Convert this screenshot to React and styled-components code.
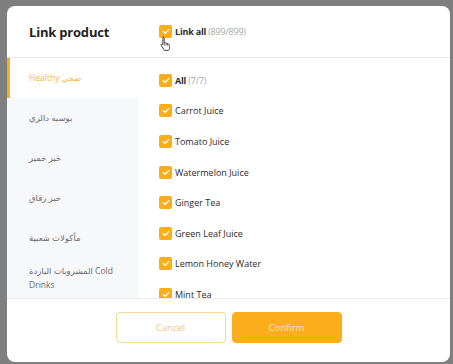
import React from 'react';
import styled, { createGlobalStyle } from 'styled-components';

const GlobalStyle = createGlobalStyle`
    html, body {
        margin: 0;
        padding: 0;
        background: #7f7f7f;
        font-family: "Open Sans", "DejaVu Sans", sans-serif;
    }
`;

const Overlay = styled.div`
    width: 453px;
    height: 364px;
    box-sizing: border-box;
    padding: 6px 3px 2px 7px;
    background: #7f7f7f;
    overflow: hidden;
`;

const Modal = styled.div`
    background: #fff;
    border-radius: 8px;
    height: 100%;
    display: flex;
    flex-direction: column;
    overflow: hidden;
`;

const Header = styled.header`
    display: flex;
    align-items: center;
    height: 51px;
    border-bottom: 1px solid #e8e8e8;
    flex-shrink: 0;
`;

const Title = styled.h1`
    width: 131px;
    box-sizing: border-box;
    padding-left: 22px;
    margin: 0;
    font-size: 13px;
    letter-spacing: -0.2px;
    font-weight: 700;
    color: #1f1f1f;
`;

const HeaderCheck = styled.div`
    position: relative;
    padding-left: 21px;
    display: flex;
    align-items: center;
    gap: 3px;
`;

const Body = styled.div`
    display: flex;
    flex: 1;
    min-height: 0;
`;

const Sidebar = styled.ul`
    list-style: none;
    margin: 0;
    padding: 0;
    width: 131px;
    background: #f7f8fa;
    overflow: hidden;
    flex-shrink: 0;
`;

const SideItem = styled.li`
    height: 40px;
    box-sizing: border-box;
    display: flex;
    align-items: center;
    padding: 0 12px 0 ${({ $active }) => ($active ? '19px' : '22px')};
    font-size: 8.5px;
    line-height: 14px;
    color: ${({ $active }) => ($active ? '#f7b63c' : '#6a6a6a')};
    background: ${({ $active }) => ($active ? '#fff' : 'transparent')};
    border-left: ${({ $active }) => ($active ? '3px solid #f7ae24' : 'none')};
`;

const List = styled.div`
    flex: 1;
    padding: 7px 0 0 21px;
    overflow: hidden;
`;

const Row = styled.div`
    height: 30.6px;
    display: flex;
    align-items: center;
    gap: 3px;
`;

const Box = styled.span`
    width: 13px;
    height: 13px;
    border-radius: 2px;
    background: #fbad1c;
    display: flex;
    align-items: center;
    justify-content: center;
    flex-shrink: 0;
`;

const Label = styled.span`
    font-size: 9px;
    color: #2b2b2b;
    font-weight: ${({ $bold }) => ($bold ? 700 : 400)};
    letter-spacing: ${({ $bold }) => ($bold ? '-0.2px' : '0')};
`;

const Count = styled.span`
    color: #a8a8a8;
    font-weight: 400;
`;

const Cursor = styled.svg`
    position: absolute;
    left: 21px;
    top: 11px;
`;

const Footer = styled.footer`
    height: 64px;
    flex-shrink: 0;
    border-top: 1px solid #ececec;
    box-sizing: border-box;
    display: flex;
    justify-content: center;
    align-items: flex-start;
    gap: 6px;
    padding-top: 13px;
`;

const Button = styled.button`
    width: 110px;
    height: 31px;
    border-radius: 4px;
    font-family: inherit;
    font-size: 9.5px;
    border: 1px solid ${({ $primary }) => ($primary ? '#fbad1c' : '#f9d898')};
    background: ${({ $primary }) => ($primary ? '#fbad1c' : '#fff')};
    color: ${({ $primary }) => ($primary ? '#fde6bd' : '#f6c870')};
`;

const Check = () => (
    <svg width="8" height="7" viewBox="0 0 8 7">
        <path d="M1.2 3.6 L3.2 5.4 L6.8 1.6" fill="none" stroke="#fff" strokeWidth="1.3" strokeLinecap="round" strokeLinejoin="round" />
    </svg>
);

const categories = [
    'Healthy صحي',
    'بوسبه دالري',
    'خبز خمير',
    'خبز رقاق',
    'مأكولات شعبية',
    'المشروبات الباردة Cold Drinks',
];

const products = [
    'Carrot Juice',
    'Tomato Juice',
    'Watermelon Juice',
    'Ginger Tea',
    'Green Leaf Juice',
    'Lemon Honey Water',
    'Mint Tea',
];

export default function App() {
    return (
        <Overlay>
            <GlobalStyle />
            <Modal>
                <Header>
                    <Title>Link product</Title>
                    <HeaderCheck>
                        <Box><Check /></Box>
                        <Label $bold>Link all <Count>(899/899)</Count></Label>
                        <Cursor width="13" height="15" viewBox="0 0 13 15">
                            <path d="M4 1.2c.7 0 1.2.5 1.2 1.2v4.3l.3-.1c.6-.2 1.3.1 1.5.7.5-.3 1.2-.2 1.5.4.5-.2 1.2 0 1.4.6l.6 2.3c.4 1.5-.1 3-1.3 3.8H5.4L2.2 9.5c-.4-.5-.3-1.1.2-1.4.4-.3 1-.2 1.3.2l.2.3V2.4c0-.7.5-1.200 1.1-1.2z" fill="#fff" stroke="#333" strokeWidth="0.9" strokeLinejoin="round" />
                            <path d="M5.4 7.2v2.3M7 7.4v2.1M8.5 7.8v1.8" stroke="#333" strokeWidth="0.7" />
                        </Cursor>
                    </HeaderCheck>
                </Header>
                <Body>
                    <Sidebar>
                        {categories.map((c, i) => (
                            <SideItem key={c} $active={i === 0}>{c}</SideItem>
                        ))}
                    </Sidebar>
                    <List>
                        <Row>
                            <Box><Check /></Box>
                            <Label $bold>All <Count>(7/7)</Count></Label>
                        </Row>
                        {products.map((p) => (
                            <Row key={p}>
                                <Box><Check /></Box>
                                <Label>{p}</Label>
                            </Row>
                        ))}
                    </List>
                </Body>
                <Footer>
                    <Button>Cancel</Button>
                    <Button $primary>Confirm</Button>
                </Footer>
            </Modal>
        </Overlay>
    );
}
